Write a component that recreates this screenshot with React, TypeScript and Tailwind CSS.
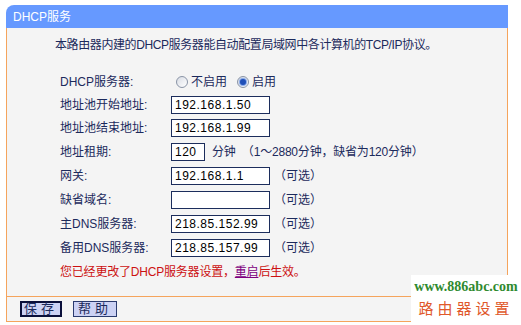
import React from 'react';

const cjk = { fontFamily: '"Liberation Sans", "Noto Sans CJK SC", sans-serif' };

function Radio({ checked }: { checked?: boolean }) {
  return (
    <span className="flex h-[12px] w-[12px] items-center justify-center rounded-full border border-[#8a94a6] bg-gradient-to-br from-[#d8dce4] to-[#ffffff]">
      {checked && <span className="h-[6px] w-[6px] rounded-full bg-[#1f4fb8] shadow-[0_0_1px_1px_#7fa3e8]" />}
    </span>
  );
}

function TextBox({ value, width = 'w-[99px]' }: { value: string; width?: string }) {
  return (
    <div className={`flex h-[18px] ${width} items-center border border-[#1c2d5c] bg-white pl-[3px] text-[12px] tracking-[0.5px] text-black`}>
      {value}
    </div>
  );
}

const rows = [
  { label: '地址池开始地址:', value: '192.168.1.50' },
  { label: '地址池结束地址:', value: '192.168.1.99' },
];

const optional = [
  { label: '网关:', value: '192.168.1.1' },
  { label: '缺省域名:', value: '' },
  { label: '主DNS服务器:', value: '218.85.152.99' },
  { label: '备用DNS服务器:', value: '218.85.157.99' },
];

export default function App() {
  return (
    <div className="relative h-[325px] w-[521px] overflow-hidden bg-white text-[12px] text-[#1c2a5c]" style={cjk}>
      <div className="ml-[6px] mt-[5px] w-[502px]">
        <div className="flex h-[23px] items-center rounded-tl-[8px] bg-[#6699ff] pl-[7px] text-[12px] text-white">
          DHCP服务
        </div>
        <div className="border-x border-b border-[#f5a45c] bg-[#f4f4f4]">
          <div className="h-[268px]">
            <div className="flex h-[34px] items-center pl-[48px] tracking-[-0.4px]">
              本路由器内建的DHCP服务器能自动配置局域网中各计算机的TCP/IP协议。
            </div>
            <div className="pl-[53px] pt-[9px]">
              <div className="flex h-[22px] items-center">
                <span className="w-[111px]">DHCP服务器:</span>
                <span className="ml-[5px] flex items-center gap-[3px]">
                  <Radio />
                  <span>不启用</span>
                </span>
                <span className="ml-[10px] flex items-center gap-[3px]">
                  <Radio checked />
                  <span>启用</span>
                </span>
              </div>
              {rows.map((r) => (
                <div key={r.label} className="flex h-[23px] items-center">
                  <span className="w-[111px]">{r.label}</span>
                  <TextBox value={r.value} />
                </div>
              ))}
              <div className="flex h-[25px] items-center">
                <span className="w-[111px]">地址租期:</span>
                <TextBox value="120" width="w-[34px]" />
                <span className="ml-[7px] tracking-[-0.2px]">分钟&nbsp;&nbsp;（1～2880分钟，缺省为120分钟）</span>
              </div>
              {optional.map((r) => (
                <div key={r.label} className="flex h-[24px] items-center">
                  <span className="w-[111px]">{r.label}</span>
                  <TextBox value={r.value} />
                  <span className="ml-[4px]">（可选）</span>
                </div>
              ))}
              <div className="flex h-[22px] items-center pt-[2px] tracking-[-0.2px] text-[#cc1111]">
                您已经更改了DHCP服务器设置，
                <span className="text-[#800080] underline">重启</span>
                后生效。
              </div>
            </div>
          </div>
          <div className="flex h-[25px] items-center gap-[11px] border-t border-[#f5a45c] pl-[13px]">
            <button className="flex h-[16px] w-[42px] items-center justify-center border-2 border-[#0a0f3a] bg-[#ccd2f4] text-[13px] tracking-[4px] text-[#1c2a5c]">
              保存
            </button>
            <button className="flex h-[16px] w-[44px] items-center justify-center border border-[#2a3a6e] bg-[#ccd2f4] text-[13px] tracking-[4px] text-[#1c2a5c]">
              帮助
            </button>
          </div>
        </div>
      </div>
      <div className="absolute left-[411px] top-[275px] flex h-[50px] w-[110px] flex-col items-center bg-white">
        <span
          className="mt-[4px] text-[14px] font-bold leading-[16px] text-[#2f8a2f]"
          style={{ fontFamily: '"Liberation Serif", serif' }}
        >
          www.886abc.com
        </span>
        <span
          className="mt-[3px] text-[15px] leading-[20px] tracking-[4px] text-[#e0582a]"
          style={{ fontFamily: '"Noto Sans CJK SC", sans-serif' }}
        >
          路由器设置
        </span>
      </div>
    </div>
  );
}
